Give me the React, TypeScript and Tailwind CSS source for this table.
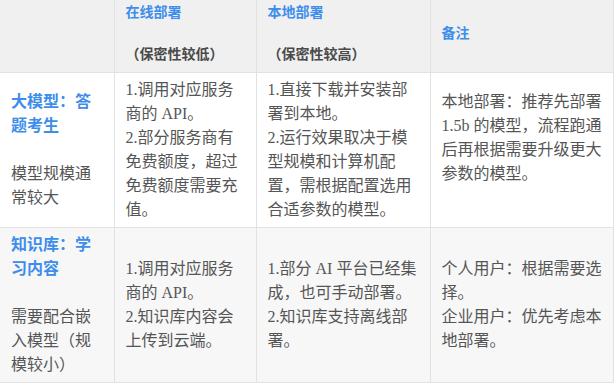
import React from 'react';

const rows = [
  {
    title: ['大模型：答', '题考生'],
    note: ['模型规模通', '常较大'],
    online: ['1.调用对应服务', '商的 API。', '2.部分服务商有', '免费额度，超过', '免费额度需要充', '值。'],
    local: ['1.直接下载并安装部', '署到本地。', '2.运行效果取决于模', '型规模和计算机配', '置，需根据配置选用', '合适参数的模型。'],
    remark: ['本地部署：推荐先部署', '1.5b 的模型，流程跑通', '后再根据需要升级更大', '参数的模型。', ''],
    bg: 'bg-white',
  },
  {
    title: ['知识库：学', '习内容'],
    note: ['需要配合嵌', '入模型（规', '模较小）'],
    online: ['1.调用对应服务', '商的 API。', '2.知识库内容会', '上传到云端。'],
    local: ['1.部分 AI 平台已经集', '成，也可手动部署。', '2.知识库支持离线部', '署。'],
    remark: ['个人用户：根据需要选', '择。', '企业用户：优先考虑本', '地部署。'],
    bg: 'bg-[#f7f7f7]',
  },
];

function Lines({ lines }: { lines: string[] }) {
  return (
    <>
      {lines.map((l, i) => (
        <div key={i} className="whitespace-nowrap h-6">
          {l}
        </div>
      ))}
    </>
  );
}

export default function App() {
  return (
    <div
      className="w-[615px] h-[383px] bg-white text-[16px] leading-6 text-[#555]"
      style={{ fontFamily: '"Liberation Serif", "Noto Sans CJK SC", serif' }}
    >
      <table className="border-collapse table-fixed w-[613px]">
        <colgroup>
          <col className="w-[114px]" />
          <col className="w-[142px]" />
          <col className="w-[174px]" />
          <col className="w-[183px]" />
        </colgroup>
        <thead>
          <tr className="bg-[#f0f0f0] h-[72px] text-[14px] leading-[21px] font-bold text-left">
            <th className="border-r border-b border-[#e2e2e2]" />
            <th className="border-x border-b border-[#e2e2e2] align-top pt-[2px] px-[11px] font-bold">
              <div className="text-[#3d8deb]">在线部署</div>
              <div className="h-[21px]" />
              <div className="text-[#4a4a4a]">（保密性较低）</div>
            </th>
            <th className="border-x border-b border-[#e2e2e2] align-top pt-[2px] px-[11px] font-bold">
              <div className="text-[#3d8deb]">本地部署</div>
              <div className="h-[21px]" />
              <div className="text-[#4a4a4a]">（保密性较高）</div>
            </th>
            <th className="border-x border-b border-[#e2e2e2] align-middle pb-[4px] px-[11px] font-bold text-[#3d8deb]">
              备注
            </th>
          </tr>
        </thead>
        <tbody>
          {rows.map((r, i) => (
            <tr key={i} className={r.bg}>
              <td className="border-r border-b border-[#e2e2e2] align-middle py-[5px] px-[11px]">
                <div className="text-[#3d8deb] font-semibold">
                  <Lines lines={r.title} />
                </div>
                <div className="h-6" />
                <Lines lines={r.note} />
              </td>
              <td className="border-x border-b border-[#e2e2e2] align-middle py-[5px] px-[11px]">
                <Lines lines={r.online} />
              </td>
              <td className="border-x border-b border-[#e2e2e2] align-middle py-[5px] px-[11px]">
                <Lines lines={r.local} />
              </td>
              <td className="border-x border-b border-[#e2e2e2] align-middle py-[5px] px-[11px]">
                <Lines lines={r.remark} />
              </td>
            </tr>
          ))}
        </tbody>
      </table>
    </div>
  );
}
